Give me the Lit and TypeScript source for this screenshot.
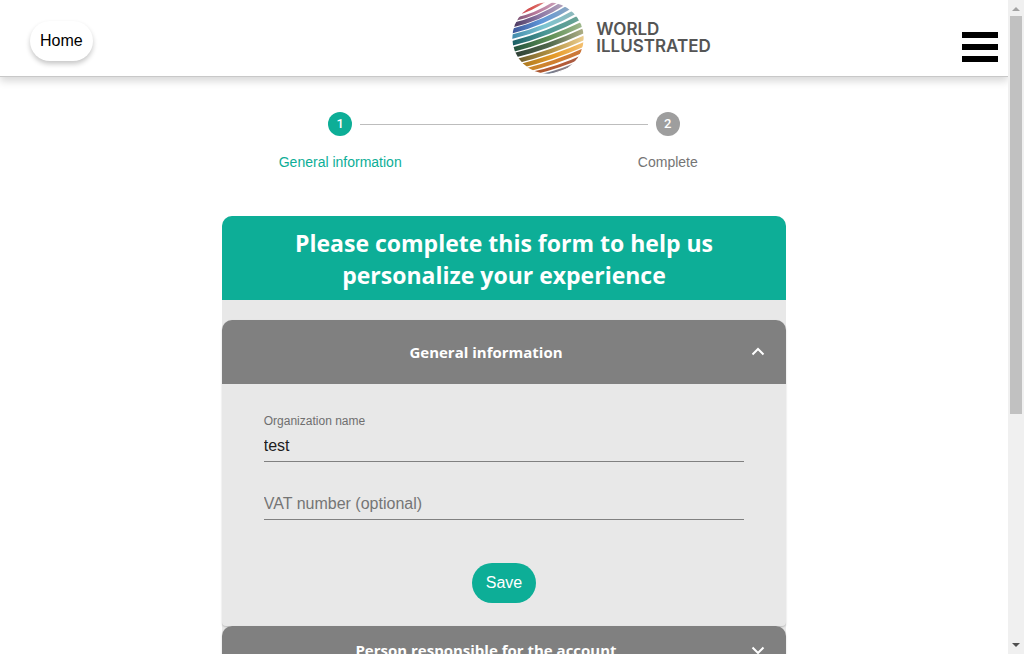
import { LitElement, html, css, svg } from "lit";
import { customElement, property } from "lit/decorators.js";

interface Band {
  d: string;
  width: number;
  from: string;
  mid: string;
  to: string;
}

const BANDS: Band[] = [
  { d: "M28 38 Q74 26 116 -5", width: 8, from: "#c04a5e", mid: "#d95550", to: "#d98a8e" },
  { d: "M22 55 Q84 42 148 0", width: 9, from: "#7a5474", mid: "#b9799c", to: "#c9a0b8" },
  { d: "M10 73 Q90 57 174 2", width: 13, from: "#45335a", mid: "#8b76a4", to: "#b5a6bd" },
  { d: "M4 92 Q100 70 196 11", width: 14, from: "#3a4f92", mid: "#5d96d8", to: "#93a9bd" },
  { d: "M4 109 Q108 86 214 26", width: 13, from: "#3d86a8", mid: "#7cc4d0", to: "#8fb6b8" },
  { d: "M4 129 Q114 103 226 44", width: 14, from: "#165a60", mid: "#4c9896", to: "#6fa595" },
  { d: "M6 148 Q120 119 234 64", width: 14, from: "#1d4b3c", mid: "#5a8c52", to: "#a8bd94" },
  { d: "M12 165 Q128 136 238 84", width: 14, from: "#2c3c34", mid: "#51694c", to: "#b9b78c" },
  { d: "M24 181 Q136 153 240 105", width: 13, from: "#6b5a2c", mid: "#b59444", to: "#f3d59a" },
  { d: "M38 195 Q142 169 240 125", width: 13, from: "#a9771f", mid: "#e59b2a", to: "#f6c67c" },
  { d: "M52 208 Q146 185 238 143", width: 12, from: "#c98a2a", mid: "#d07f30", to: "#c9733c" },
  { d: "M72 217 Q150 201 232 163", width: 9, from: "#a8552c", mid: "#b95c34", to: "#a05a4c" },
  { d: "M94 223 Q156 211 224 179", width: 6, from: "#5c7894", mid: "#8a7f86", to: "#8c8890" },
  { d: "M114 226 Q164 216 214 192", width: 4, from: "#4c74a4", mid: "#6d8db0", to: "#8c98a8" },
];

@customElement("brand-logo")
export class BrandLogo extends LitElement {
  static styles = css`
    :host {
      display: block;
    }
    .brand {
      display: flex;
      align-items: center;
      gap: 12px;
      color: #555;
      text-decoration: none;
      font: 600 17px/17px Inter, sans-serif;
    }
    .globe {
      display: block;
      width: 72px;
      height: 72px;
    }
    .name {
      display: grid;
    }
  `;

  render() {
    return html`
      <a class="brand" href="#">
        <svg class="globe" viewBox="12 3 216 216" aria-hidden="true">
          <defs>
            <clipPath id="disc"><circle cx="120" cy="111" r="107" /></clipPath>
            ${BANDS.map(
              (b, i) => svg`<linearGradient id=${`g${i}`}>
                <stop offset="0" stop-color=${b.from} />
                <stop offset="0.5" stop-color=${b.mid} />
                <stop offset="1" stop-color=${b.to} />
              </linearGradient>`,
            )}
          </defs>
          <g clip-path="url(#disc)" fill="none">
            ${BANDS.map((b, i) => svg`<path d=${b.d} stroke=${`url(#g${i})`} stroke-width=${b.width} />`)}
          </g>
        </svg>
        <span class="name"><span>WORLD</span><span>ILLUSTRATED</span></span>
      </a>
    `;
  }
}

@customElement("form-panel")
export class FormPanel extends LitElement {
  @property() heading = "";
  @property({ type: Boolean, reflect: true }) open = false;

  static styles = css`
    :host {
      display: block;
      border-radius: 10px 10px 4px 4px;
      background: #e8e8e8;
      box-shadow: 0 1px 2px rgba(0, 0, 0, 0.2);
    }
    .head {
      display: flex;
      align-items: center;
      box-sizing: border-box;
      width: 100%;
      min-height: 48px;
      padding: 0 20px 0 0;
      border: 0;
      border-radius: 10px 10px 0 0;
      background: #808080;
      color: #fff;
      font: 700 15px/24px "Open Sans", "Noto Sans", sans-serif;
      cursor: pointer;
    }
    :host([open]) .head {
      min-height: 64px;
    }
    .text {
      flex: 1;
    }
    .chevron {
      width: 16px;
      height: 16px;
      fill: none;
      stroke: #fff;
      stroke-width: 2;
    }
  `;

  private toggle() {
    this.open = !this.open;
  }

  render() {
    return html`
      <button class="head" type="button" aria-expanded=${this.open} @click=${this.toggle}>
        <span class="text">${this.heading}</span>
        <svg class="chevron" viewBox="0 0 16 16" aria-hidden="true">
          <path d=${this.open ? "M2.5 10.5 L8 5 L13.5 10.5" : "M2.5 5.5 L8 11 L13.5 5.5"} />
        </svg>
      </button>
      ${this.open ? html`<slot></slot>` : null}
    `;
  }
}

@customElement("app-root")
export class AppRoot extends LitElement {
  static styles = css`
    :host {
      display: flex;
      height: 100vh;
      overflow: hidden;
      background: #fff;
      font: 16px/24px "Liberation Sans", Arial, sans-serif;
    }
    .page {
      flex: 1;
      min-width: 0;
      overflow: hidden;
    }
    .bar {
      display: grid;
      grid-template-columns: 1fr auto 1fr;
      align-items: center;
      box-sizing: border-box;
      height: 77px;
      padding: 0 10px 0 30px;
      border-bottom: 1px solid #c8c8c8;
      box-shadow: 0 4px 8px rgba(0, 0, 0, 0.16);
    }
    .home {
      justify-self: start;
      margin-top: 6px;
      padding: 8px 10px;
      border-radius: 20px;
      box-shadow: 0 3px 5px rgba(0, 0, 0, 0.22);
      color: #000;
      text-decoration: none;
    }
    .logo {
      grid-column: 2;
      padding-left: 195px;
    }
    .menu {
      display: grid;
      gap: 6px;
      justify-self: end;
      margin-top: 18px;
      padding: 0;
      border: 0;
      background: none;
      cursor: pointer;
    }
    .stroke {
      width: 36px;
      height: 6px;
      background: #000;
    }
    .steps {
      display: flex;
      width: 65%;
      margin: 35px auto 0;
      padding: 0;
      list-style: none;
      color: #757575;
      font-size: 14px;
      text-align: center;
    }
    .step {
      flex: 1;
    }
    .track {
      display: flex;
      align-items: center;
      gap: 8px;
      margin-bottom: 14px;
    }
    .track::before,
    .track::after {
      content: "";
      flex: 1;
      height: 1px;
      background: #bdbdbd;
    }
    .step:first-child .track::before,
    .step:last-child .track::after {
      background: none;
    }
    .dot {
      width: 24px;
      border-radius: 50%;
      background: #9e9e9e;
      color: #fff;
      font: 500 13px/24px Roboto, sans-serif;
    }
    .current {
      color: #0dae97;
    }
    .current .dot {
      background: #0dae97;
    }
    .card {
      width: 56%;
      margin: 42px auto 0;
      border-radius: 10px 10px 0 0;
      background: #e8e8e8;
    }
    .title {
      margin: 0 0 20px;
      padding: 11px 60px 9px;
      border-radius: 10px 10px 0 0;
      background: #0dae97;
      color: #fff;
      font: 700 23px/32px "Open Sans", "Noto Sans", sans-serif;
      text-align: center;
    }
    .form {
      display: grid;
      padding: 28px 42px 23px;
    }
    .field {
      display: grid;
      align-content: end;
      box-sizing: border-box;
      margin-bottom: 8px;
      height: 50px;
      border-bottom: 1px solid #808080;
    }
    .label {
      color: #6f6f6f;
      font-size: 12px;
      line-height: 18px;
    }
    .input {
      width: 100%;
      height: 31px;
      padding: 0;
      border: 0;
      outline: 0;
      background: none;
      color: #1c1c1c;
      font: inherit;
    }
    .input::placeholder {
      color: #757575;
      opacity: 1;
    }
    .save {
      justify-self: center;
      margin-top: 35px;
      padding: 8px 14px;
      border: 0;
      border-radius: 20px;
      background: #0dae97;
      color: #fff;
      font: inherit;
      cursor: pointer;
    }
    .scroll {
      display: flex;
      flex-direction: column;
      align-items: center;
      width: 16px;
      background: #f0f0f0;
    }
    .arrow {
      width: 16px;
      height: 16px;
      fill: #a3a3a3;
    }
    .down {
      fill: #505050;
    }
    .rail {
      flex: 1;
      width: 12px;
    }
    .thumb {
      height: 64%;
      background: #c1c1c1;
    }
  `;

  render() {
    return html`
      <div class="page">
        <header class="bar">
          <a class="home" href="#">Home</a>
          <brand-logo class="logo"></brand-logo>
          <button class="menu" type="button" aria-label="Menu">
            <span class="stroke"></span><span class="stroke"></span><span class="stroke"></span>
          </button>
        </header>
        <main>
          <ol class="steps">
            <li class="step current" aria-current="step">
              <div class="track"><span class="dot">1</span></div>
              General information
            </li>
            <li class="step">
              <div class="track"><span class="dot">2</span></div>
              Complete
            </li>
          </ol>
          <section class="card">
            <h1 class="title">Please complete this form to help us personalize your experience</h1>
            <form-panel heading="General information" open>
              <form class="form" @submit=${(e: Event) => e.preventDefault()}>
                <div class="field">
                  <label class="label" for="org">Organization name</label>
                  <input class="input" id="org" .value=${"test"} />
                </div>
                <div class="field">
                  <input class="input" aria-label="VAT number (optional)" placeholder="VAT number (optional)" />
                </div>
                <button class="save" type="submit">Save</button>
              </form>
            </form-panel>
            <form-panel heading="Person responsible for the account"></form-panel>
          </section>
        </main>
      </div>
      <div class="scroll" aria-hidden="true">
        <svg class="arrow" viewBox="0 0 16 16"><path d="M4 11 L8 7 L12 11 Z" /></svg>
        <div class="rail"><div class="thumb"></div></div>
        <svg class="arrow down" viewBox="0 0 16 16"><path d="M4 5 L8 9 L12 5 Z" /></svg>
      </div>
    `;
  }
}
